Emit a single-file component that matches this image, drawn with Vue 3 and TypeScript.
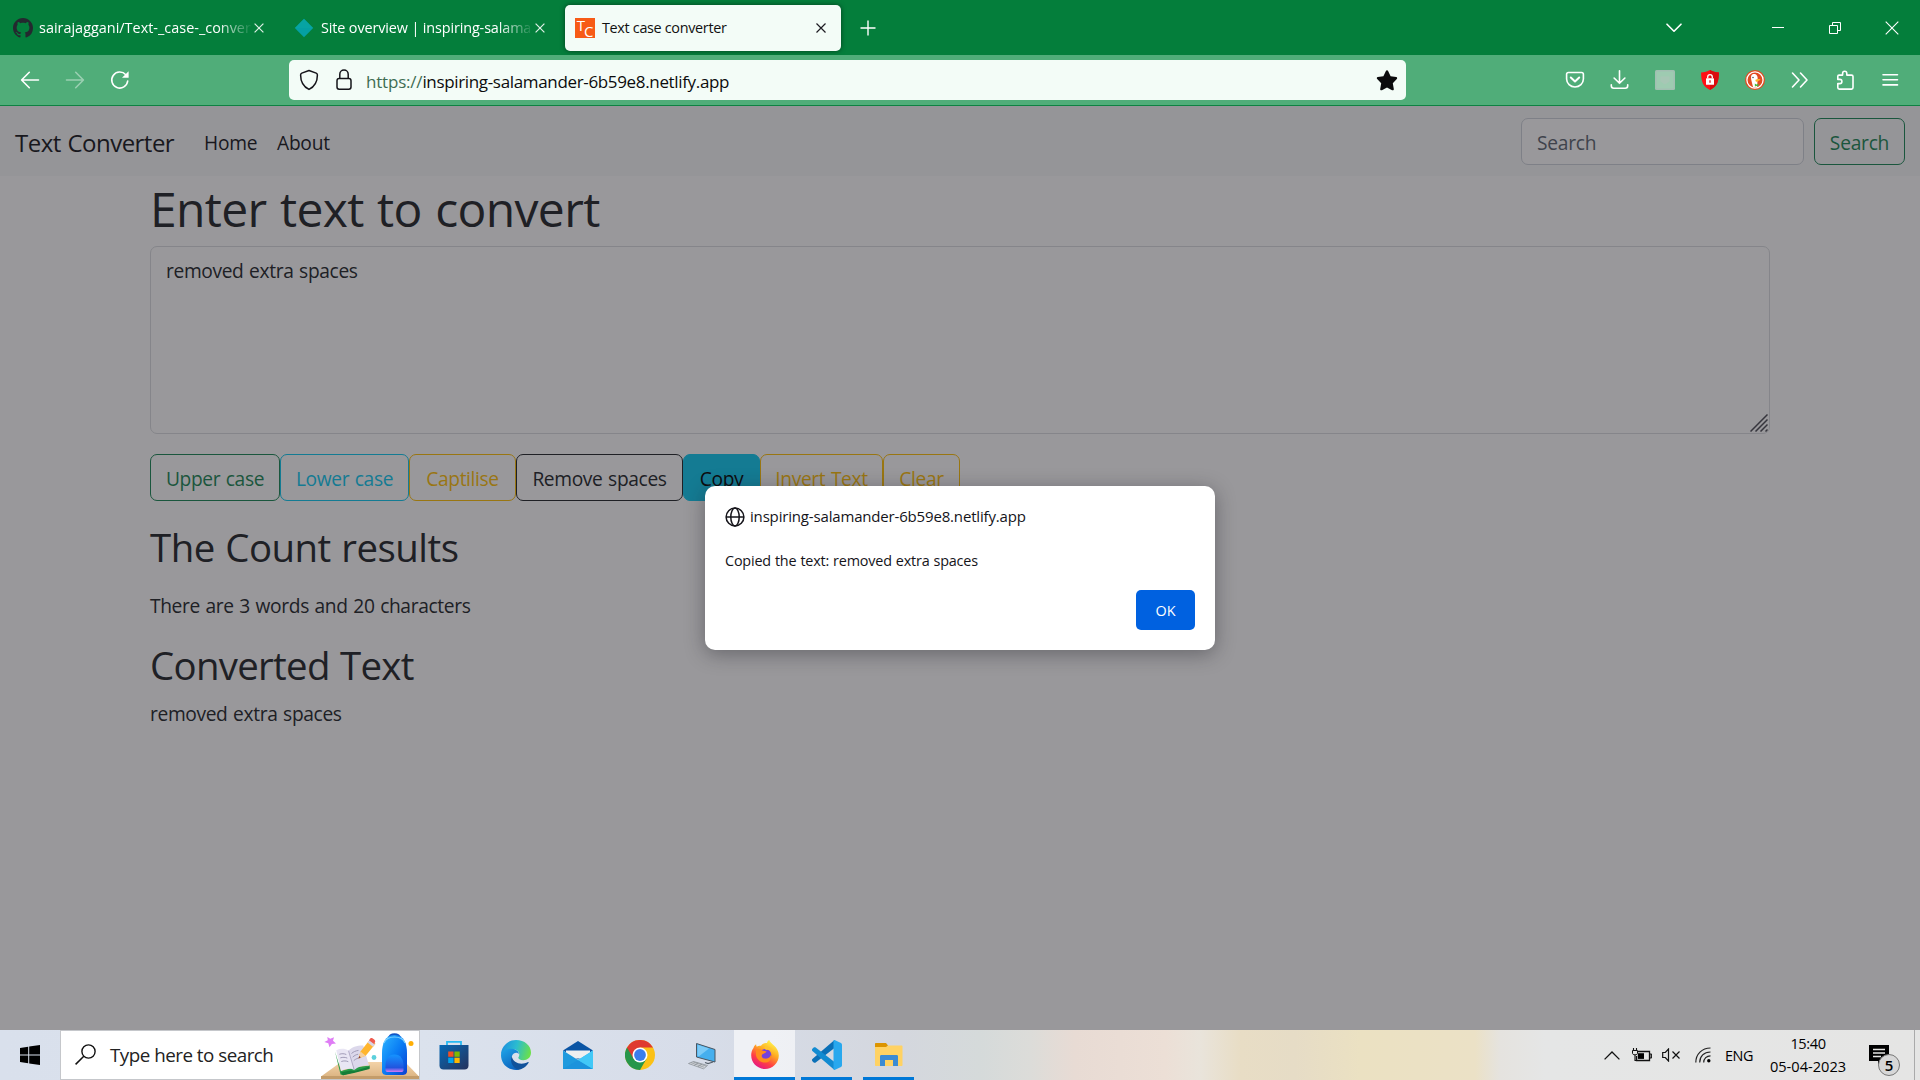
<script setup lang="ts">
interface ActionButton {
  label: string
  tone: string
  width: number
}

const actions: ActionButton[] = [
  { label: 'Upper case', tone: 'success', width: 130 },
  { label: 'Lower case', tone: 'info', width: 129 },
  { label: 'Captilise', tone: 'warning', width: 107 },
  { label: 'Remove spaces', tone: 'dark', width: 167 },
  { label: 'Copy', tone: 'solid', width: 77 },
  { label: 'Invert Text', tone: 'warning', width: 123 },
  { label: 'Clear', tone: 'warning', width: 77 },
]

const text = 'removed extra spaces'
const host = 'inspiring-salamander-6b59e8.netlify.app'
const wordCount = text.split(' ').length
</script>

<template>
  <div class="desktop">
    <header class="tabs">
      <div class="tab first">
        <svg class="fav" width="20" height="20" viewBox="0 0 16 16"><path fill="#24292f" d="M8 0C3.58 0 0 3.58 0 8c0 3.54 2.29 6.53 5.47 7.59.4.07.55-.17.55-.38 0-.19-.01-.82-.01-1.49-2.01.37-2.53-.49-2.69-.94-.09-.23-.48-.94-.82-1.13-.28-.15-.68-.52-.01-.53.63-.01 1.08.58 1.23.82.72 1.21 1.87.87 2.33.66.07-.52.28-.87.51-1.07-1.78-.2-3.64-.89-3.64-3.95 0-.87.31-1.59.82-2.15-.08-.2-.36-1.02.08-2.12 0 0 .67-.21 2.2.82.64-.18 1.32-.27 2-.27s1.36.09 2 .27c1.53-1.04 2.2-.82 2.2-.82.44 1.1.16 1.92.08 2.12.51.56.82 1.27.82 2.15 0 3.07-1.87 3.75-3.65 3.95.29.25.54.73.54 1.48 0 1.07-.01 1.93-.01 2.2 0 .21.15.46.55.38A8.01 8.01 0 0 0 16 8c0-4.42-3.58-8-8-8z"/></svg>
        <span class="tab-title faded repo">sairajaggani/Text-_case-_conver</span>
        <svg class="x" width="10" height="10" viewBox="0 0 10 10"><path d="M.6.6l8.8 8.8M9.4.6L.6 9.4" stroke="#dff0e6" stroke-width="1.2"/></svg>
      </div>
      <div class="tab second">
        <svg class="fav" width="20" height="20" viewBox="0 0 20 20"><path d="M10 .8L19.2 10 10 19.2.8 10z" fill="#05a0a3"/><path d="M10 .8L19.2 10H.8z" fill="#0ba9a5" opacity=".45"/></svg>
        <span class="tab-title faded site">Site overview | inspiring-salama</span>
        <svg class="x" width="10" height="10" viewBox="0 0 10 10"><path d="M.6.6l8.8 8.8M9.4.6L.6 9.4" stroke="#dff0e6" stroke-width="1.2"/></svg>
      </div>
      <div class="tab active">
        <span class="tc"><b>T</b><b>C</b></span>
        <span class="tab-title cur">Text case converter</span>
        <svg class="x" width="10" height="10" viewBox="0 0 10 10"><path d="M.5.5l9 9M9.500.5l-9 9" stroke="#1c1b22" stroke-width="1.2"/></svg>
      </div>
      <svg class="plus" width="16" height="16" viewBox="0 0 16 16"><path d="M8 .5v15M.5 8h15" stroke="#fff" stroke-width="1.4"/></svg>
      <span class="grow"></span>
      <svg class="all" width="16" height="10" viewBox="0 0 16 10"><path d="M1 1.200l7 7 7-7" fill="none" stroke="#fff" stroke-width="1.6" stroke-linecap="round" stroke-linejoin="round"/></svg>
      <div class="win">
        <svg width="14" height="14" viewBox="0 0 14 14"><path d="M1 6.500h12" stroke="#fff"/></svg>
        <svg width="14" height="14" viewBox="0 0 14 14"><path d="M1.500 4.500h8v8h-8zM4.500 4.500v-3h8v8h-3" fill="none" stroke="#fff"/></svg>
        <svg width="14" height="14" viewBox="0 0 14 14"><path d="M.7.700l12.600 12.600M13.300.700L.7 13.300" stroke="#fff" stroke-width="1.100"/></svg>
      </div>
    </header>

    <nav class="toolbar">
      <div class="nav-icons">
        <svg width="20" height="20" viewBox="0 0 20 20"><path d="M18.500 10H2M9.300 2.300L1.600 10l7.700 7.700" class="w"/></svg>
        <svg width="20" height="20" viewBox="0 0 20 20" opacity=".42"><path d="M1.500 10H18M10.700 2.300l7.700 7.700-7.700 7.700" class="w"/></svg>
        <svg width="20" height="20" viewBox="0 0 20 20"><path d="M17.700 11a8 8 0 1 1-1.900-6.200l1.300 1.400" class="w"/><path d="M18.600 1.200v6.600H12z" fill="#fff"/></svg>
      </div>
      <div class="url">
        <svg class="shield" width="20" height="22" viewBox="0 0 20 22"><path d="M10 1.500l7.200 2.600c1 .4 1.200.9 1.200 1.800 0 6.500-2.700 11.600-8.400 14.500C4.300 17.500 1.600 12.400 1.600 5.900c0-.9.200-1.400 1.200-1.800z" class="k"/></svg>
        <svg class="lock" width="16" height="22" viewBox="0 0 16 22"><rect x="1" y="9.500" width="14" height="10.700" rx="2.200" class="k"/><path d="M3.800 9.500V5.300a4.200 4.200 0 0 1 8.400 0v4.200" class="k"/></svg>
        <span class="addr"><i>https://</i>{{ host }}</span>
        <svg class="star" width="22" height="22" viewBox="0 0 22 22"><path d="M11 1.300c.5 0 .9.300 1.100.7l2.500 5.300 5.600.8c1 .2 1.300 1.300.6 2l-4 4.100 1 5.800c.2 1-.8 1.700-1.700 1.200L11 18.500l-5.100 2.700c-.9.500-1.900-.2-1.700-1.200l1-5.800-4-4.100c-.7-.7-.4-1.800.6-2l5.600-.8L9.900 2c.2-.4.600-.7 1.100-.7z" fill="#0b0b0d"/></svg>
      </div>
      <div class="tools">
        <svg width="20" height="20" viewBox="0 0 20 20"><path d="M3.400 2.500h13.200c1 0 1.800.7 1.800 1.700v4.900a8.400 7.900 0 0 1-16.800 0V4.200c0-1 .8-1.700 1.800-1.700z" class="w"/><path d="M5.800 7.500L10 11.400l4.200-3.900" class="w thick"/></svg>
        <svg width="20" height="20" viewBox="0 0 20 20"><path d="M9.500 .8v12.400M4.100 8L9.500 13.300 14.900 8M1.300 14.800v1c0 1.600 1 2.500 2.500 2.500h11.400c1.500 0 2.500-.9 2.500-2.500v-1" class="w"/></svg>
        <svg width="20" height="20" viewBox="0 0 20 20"><rect width="20" height="20" rx="1.500" fill="#a2bfb2"/><rect x="1.500" y="1.500" width="17" height="17" fill="#9ecbb1"/><path d="M5.500 6.500h9v5l-4.500 3-4.500-3z" fill="#a7c7b5"/></svg>
        <svg width="20" height="20" viewBox="0 0 20 20"><path d="M10 0c2.500 1.600 5.500 2.400 8.900 2.500 0 8.500-1.600 14-8.900 17.500C2.700 16.500 1.100 11 1.100 2.500 4.500 2.400 7.500 1.600 10 0z" fill="#ff1014"/><path d="M10 0c2.500 1.600 5.500 2.400 8.900 2.500 0 8.500-1.600 14-8.900 17.500z" fill="#d90c0e"/><rect x="6" y="8.300" width="8" height="6.500" rx=".6" fill="#fff"/><path d="M7.700 8.300V7a2.300 2.300 0 0 1 4.600 0v1.300" fill="none" stroke="#fff" stroke-width="1.300"/><path d="M9.400 10.300h1.200v2.500H9.400z" fill="#d90c0e"/></svg>
        <svg width="20" height="20" viewBox="0 0 20 20"><circle cx="10" cy="10" r="10" fill="#e34a21"/><circle cx="10" cy="10" r="8.100" fill="#e34a21" stroke="#fff" stroke-width="1.300"/><path d="M6.500 5.200c1.200-1.700 4.200-1.500 5.400.3.800 1.200.9 2.800.6 4.200l-.3 7.300c-1.500.6-3 .5-4.200.1-.4-2.500-1.300-5-1.700-7.200-.3-1.700-.5-3.500.2-4.700z" fill="#fff"/><path d="M10.500 9.700c1.500-1 3.500-.9 5-.3-1 1.300-2.500 1.400-3.200 2.300-1.200.3-2.200-.5-1.800-2z" fill="#fcb62b"/><path d="M9.800 13.500l1.700 1 1.900-.7v2.700l-1.800-.5-1.700.6z" fill="#4cb944"/><circle cx="8" cy="7.500" r=".7" fill="#333"/></svg>
        <svg width="20" height="20" viewBox="0 0 20 20"><path d="M2.500 3L9 10l-6.500 7M10.500 3l6.500 7-6.500 7" class="w"/></svg>
        <svg width="20" height="20" viewBox="0 0 20 20"><path d="M2.800 7.500V6.300c0-.7.500-1.200 1.200-1.200h3.600V3.400a2.100 2.100 0 0 1 4.200 0v1.700h4.700c.9 0 1.500.6 1.500 1.500v11c0 .9-.6 1.500-1.500 1.500H4.300c-.9 0-1.500-.6-1.500-1.500v-4h2a2.100 2.100 0 0 0 0-4.200h-2z" class="w"/></svg>
        <svg width="20" height="20" viewBox="0 0 20 20"><path d="M3 4.700h14.500M3 9.700h14.500M3 14.900h14.500" class="w"/></svg>
      </div>
    </nav>

    <main class="page">
      <div class="bsnav">
        <span class="brand">Text Converter</span>
        <span class="link home">Home</span>
        <span class="link">About</span>
        <span class="grow"></span>
        <div class="search-in">Search</div>
        <div class="search-btn">Search</div>
      </div>
      <section class="container">
        <h1>Enter text to convert</h1>
        <div class="area">
          <span>{{ text }}</span>
          <svg class="grip" width="18" height="18" viewBox="0 0 18 18"><path d="M.5 17.500l17-17M5.500 17.500l12-12M10.500 17.500l7-7M15.500 17.500l2-2" stroke="#4c4c55" stroke-width="1.500"/></svg>
        </div>
        <div class="actions">
          <div v-for="a in actions" :key="a.label" class="btn" :class="a.tone" :style="{ width: a.width + 'px' }">{{ a.label }}</div>
        </div>
        <h2 class="count">The Count results</h2>
        <p class="stats">There are {{ wordCount }} words and {{ text.length }} characters</p>
        <h2 class="conv">Converted Text</h2>
        <p class="out">{{ text }}</p>
      </section>
      <div class="backdrop"></div>
      <div class="dialog">
        <div class="who">
          <svg width="20" height="20" viewBox="0 0 20 20"><g fill="none" stroke="#15141a" stroke-width="1.500"><circle cx="10" cy="10" r="8.900"/><ellipse cx="10" cy="10" rx="4.200" ry="8.900"/><path d="M1.100 10h17.800"/></g></svg>
          <span>{{ host }}</span>
        </div>
        <div class="msg">Copied the text: {{ text }}</div>
        <div class="ok">OK</div>
      </div>
    </main>

    <footer class="taskbar">
      <div class="start">
        <svg width="20" height="20" viewBox="0 0 20 20"><path d="M0 2.900l8.200-1.200v7.700H0zM9.200 1.500L20 0v9.400H9.200zM0 10.400h8.200v7.900L0 17.100zM9.200 10.400H20V20L9.200 18.500z"/></svg>
      </div>
      <div class="finder">
        <svg class="mag" width="21" height="21" viewBox="0 0 21 21"><circle cx="13.500" cy="7.500" r="6.600" fill="none" stroke="#111" stroke-width="1.400"/><path d="M8.800 12.200L.6 20.400" stroke="#111" stroke-width="1.500"/></svg>
        <span>Type here to search</span>
        <svg class="art" width="98" height="48" viewBox="0 0 98 48">
          <defs>
            <linearGradient id="desk" x1="0" y1="0" x2="0" y2="1"><stop offset="0" stop-color="#f3d2a8"/><stop offset="1" stop-color="#dcb583"/></linearGradient>
            <linearGradient id="bag" x1="0" y1="0" x2="1" y2="1"><stop offset="0" stop-color="#2db4ff"/><stop offset=".5" stop-color="#0a7df5"/><stop offset="1" stop-color="#0a3fd0"/></linearGradient>
            <linearGradient id="pocket" x1="0" y1="0" x2="0" y2="1"><stop offset="0" stop-color="#1594ff"/><stop offset=".75" stop-color="#2155df"/><stop offset="1" stop-color="#d77bf5"/></linearGradient>
          </defs>
          <path d="M0 45.500L20 31h64l14 14.500z" fill="url(#desk)"/><path d="M0 45h98v3H0z" fill="#c39c6a"/>
          <path d="M6.300 6l3 1.700L13 6.200l-1 3.600 3 2.800-4.100.3-2.400 3.400-1.200-4-4-1.200 3.500-1.900z" fill="#df7df5"/>
          <path d="M14 20.500l5.500 23 2.500.7 10-2.700 16.500-4 .3-3L33 36.500l-13 3.500z" fill="#299b49"/><path d="M19.500 41.500l10-2 4 .5 15-4.500V38L33 42l-11 2.200z" fill="#147d38"/>
          <path d="M15.300 19.200c4.500-2 9-1.700 12.200.5L33.300 39c-3.500-2-8.500-1.500-13.300 1z" fill="#e9e6f4"/><path d="M27.500 19.700c3-3.700 8.500-5.400 14.700-5.300L48 34.500c-5.500-.3-11 .7-14.700 4.500z" fill="#dcd8eb"/>
          <path d="M27.500 19.700L33.300 39" stroke="#aaa4c2" stroke-width=".9"/>
          <path d="M18.300 23.300c2.500-.9 5-.7 7 .2m-6 3.400c2.500-.9 5-.7 7 .2m-6 3.400c2.500-.9 5-.7 7 .2M30.500 22.500c2-1.800 4-2.600 7-3.100m-5.800 6.700c2-1.800 3.300-2.400 5.500-2.900m-4.400 6.400c2-1.800 4-2.600 7-3.100" stroke="#9893b0" stroke-width=".9" fill="none"/>
          <path d="M37.500 27.500l2-7 9.500-12 5.500 4.300-9.800 12z" fill="#ffb52e"/><path d="M37.500 27.500l2-7 5.200 4.300z" fill="#f5cfa0"/><path d="M37.500 27.500l.7-2.500 1.600 1.300z" fill="#733"/><path d="M46.500 11.500l2-2.600 5.500 4.300-2 2.600z" fill="#d9d4e3"/><path d="M48 9.200l1.500-1.900c1.200-1.400 5.700 1.900 4.600 3.700l-1 1.900z" fill="#f05a4e"/>
          <circle cx="53" cy="26.500" r="2.400" fill="#5cd0dc"/><circle cx="90" cy="12.500" r="2.500" fill="#ffaf05"/>
          <path d="M68 8c0-6 11-6 11 0" fill="none" stroke="#1254c4" stroke-width="2.600"/><path d="M61 22c0-9 3-18 12.500-18S86 13 86 22v18c0 3-2 4-5 4H66c-3 0-5-1-5-4z" fill="url(#bag)"/><path d="M63 12c3-8 18-8 21 0" fill="none" stroke="#77cfff" stroke-width="1.200"/><path d="M64.500 35c0-7 3-11.500 9-11.500s9 4.500 9 11.500v4c0 1.500-1 2-2.500 2H67c-1.500 0-2.500-.5-2.500-2z" fill="url(#pocket)"/>
        </svg>
      </div>
      <div class="app"><svg width="30" height="30" viewBox="0 0 30 30"><defs><linearGradient id="store" x1="0" y1="0" x2="1" y2="1"><stop stop-color="#0669b5"/><stop offset="1" stop-color="#26325c"/></linearGradient></defs><path d="M8 6V1.800h14V6" fill="none" stroke="#27b9f2" stroke-width="1.800"/><path d="M.5 5h29v20.500c0 2.500-1.500 4-4 4h-21c-2.500 0-4-1.500-4-4z" fill="url(#store)"/><path d="M9.200 11.500h5.300v5.300H9.200z" fill="#f25022"/><path d="M15.400 11.500h5.300v5.300h-5.300z" fill="#7fba00"/><path d="M9.200 17.700h5.300V23H9.200z" fill="#00a4ef"/><path d="M15.400 17.700h5.300V23h-5.300z" fill="#ffb900"/></svg></div>
      <div class="app"><svg width="30" height="30" viewBox="0 0 30 30"><defs><linearGradient id="e1" x1="0" y1=".3" x2="1" y2=".5"><stop stop-color="#1c8fe0"/><stop offset=".5" stop-color="#2bbcd0"/><stop offset="1" stop-color="#6be04a"/></linearGradient><linearGradient id="e2" x1="0" y1="0" x2=".6" y2="1"><stop stop-color="#1fa5e8"/><stop offset="1" stop-color="#0c62bd"/></linearGradient></defs><path d="M0 14.500C.3 6.500 7 0 15 0c8.500 0 15 5.500 15 12.500 0 5-3.700 7.700-7.700 7.700-3.500 0-5-1.400-5-2.400 0-.8 1-1.300 1-3.400 0-3-3-5.400-7-5.400C6 9 2 11 0 14.500z" fill="url(#e1)"/><path d="M0 15C.3 10.800 5.500 8.200 11 8.800c4 .4 7 2.600 7 5.500-1-2-5.500-2.300-7 1.700-1.600 5 2.500 11.500 9.500 11.700C18.500 29.300 17 30 15 30 6.500 30 0 23.500 0 15z" fill="url(#e2)"/><path d="M10.800 16.200C8.700 21 11 27.500 17.500 29.800c4-.6 8-3.300 10.200-7.300.2-.5-.3-.8-.7-.5-6.500 3.500-15 1.300-16.200-5.800z" fill="#11529b"/></svg></div>
      <div class="app"><svg width="30" height="30" viewBox="0 0 30 30"><path d="M0 10.500L15 1l15 9.500-15 9z" fill="#0b55a4"/><path d="M3 10.500h24v8H3z" fill="#f0f0f0"/><path d="M0 10.500l15 9.500v9H0z" fill="#1f9ade"/><path d="M30 10.500L15 20 4 29h26z" fill="#35bbf1"/><path d="M0 29l15-9 15 9z" fill="#1b93dc"/><path d="M30 10.500V29L15 20z" fill="#41c8f7"/></svg></div>
      <div class="app"><svg width="30" height="30" viewBox="0 0 30 30"><circle cx="15" cy="15" r="15" fill="#fbc116"/><path d="M15 15L2 7.500A15 15 0 0 0 15 30l6.500-11.200z" fill="#27964a"/><path d="M2 7.500A15 15 0 0 1 28 7.500H15L8.500 18.700z" fill="#df3a2f"/><circle cx="15" cy="15" r="7.500" fill="#fff"/><circle cx="15" cy="15" r="5.900" fill="#3b7ded"/></svg></div>
      <div class="app"><svg width="30" height="30" viewBox="0 0 30 30"><path d="M9.500 3.500l18.500 6v12.500L9.500 17z" fill="#45afee" stroke="#4a5560" stroke-width="1"/><path d="M10.500 4.700L22 8.500 12 16.300l-1.500-.4z" fill="#7bcaf7"/><path d="M26 22l-5 1.500-3-1" fill="none" stroke="#58626c" stroke-width="1.200"/><path d="M1.500 23.500l5-2 14 4-4 3.300z" fill="#d9dce1" stroke="#8a9097" stroke-width=".8"/><path d="M4 22.700l13 4.500M6 21.900l13 4.200M7 25.500l4-2.500M11 26.700l4-2.500" stroke="#8a9097" stroke-width=".7"/></svg></div>
      <div class="app firefox"><svg width="30" height="30" viewBox="0 0 30 30"><defs><linearGradient id="ff" x1=".8" y1=".1" x2=".3" y2="1"><stop stop-color="#fff04a"/><stop offset=".35" stop-color="#ffab21"/><stop offset=".7" stop-color="#ff3f45"/><stop offset="1" stop-color="#e31587"/></linearGradient></defs><path d="M3.500 8c.5-1.700 1.400-3 2.600-3.700 0 1 .2 1.800.7 2.500C8.200 5.700 10 5.500 11 5.700 12.500 3.500 15 3 17 3c.3-1.500 1-2.500 2.300-3C20 4 28.700 6 28.800 15.500 28.800 23 22.500 29 15 29S1.200 23 1.200 15.300C1.200 12.500 2 10 3.500 8z" fill="url(#ff)"/><circle cx="15.300" cy="15" r="6" fill="#7540dc"/><path d="M6 10c2-1.500 4.200-1 6 .2 1.300.8 3.500.6 4.500 1.300-.5 1.700-2.700 1.700-4 2.800-1.800 1.700-.2 3.900 2 4.300 3.500.7 6-1.500 6.500-4 .7 5-2 8-6 8-5 0-8-3.500-9-7z" fill="#ff8b1e"/><path d="M15 6.200c3.800-.3 7.500 2.300 8 6.300-2-2.800-4.500-3-7-2.500-1.200-1-1.800-2.500-1-3.800z" fill="#ffc42e"/></svg></div>
      <div class="app open"><svg width="30" height="30" viewBox="0 0 30 30"><path d="M22.500 0v8L3.700 22.500c-.6.500-1.500.4-2-.1L.4 21.200c-.6-.6-.6-1.600 0-2.200z" fill="#0b70b7"/><path d="M22.500 30v-8L3.700 7.500c-.6-.5-1.500-.4-2 .1L.4 8.800c-.6.600-.6 1.600 0 2.200z" fill="#128bd1"/><path d="M22.500 0l6.500 3c.6.300 1 .9 1 1.500v21c0 .6-.4 1.200-1 1.500l-6.500 3c-.7 0-1-.6-1-1.200V1.200c0-.6.300-1.200 1-1.200z" fill="#28a8ee"/></svg></div>
      <div class="app open files"><svg width="30" height="30" viewBox="0 0 30 30"><path d="M1 4c0-.6.400-1 1-1h10l2 2.500L12 8H1z" fill="#dc9400"/><path d="M1 7h11l2-1.500h13.500c.7 0 1 .4 1 1V25c0 .600-.4 1-1 1H2c-.6 0-1-.4-1-1z" fill="#ffd263"/><path d="M6 26V16.500c0-1 .5-1.500 1.500-1.500h15c1 0 1.500.5 1.500 1.500V26h-5v-6h-8v6z" fill="#3b8bd4"/></svg></div>
      <span class="grow"></span>
      <div class="tray">
        <svg class="t1" width="16" height="9" viewBox="0 0 16 9"><path d="M.6 8.400L8 1l7.400 7.400" fill="none" stroke="#111" stroke-width="1.300"/></svg>
        <svg class="t2" width="20" height="14" viewBox="0 0 20 14"><path d="M6 3.500h11.500v9H4.500V8" fill="none" stroke="#111" stroke-width="1.300"/><path d="M5.800 5.200H12v5.700H5.800z"/><path d="M18 6h1.600v4H18zM.5 2.500h5v2.700c0 1-.8 1.600-2.500 1.600S.5 6.200.5 5.200z" fill="#e5e5e4" stroke="#111"/><path d="M1.500 2.500V0M4.500 2.500V0M3 7v5.500h2" stroke="#111" stroke-width="1.100" fill="none"/></svg>
        <svg class="t3" width="19" height="14" viewBox="0 0 19 14"><path d="M.7 4.500h2.600L6.500 1v12L3.300 9.500H.7z" fill="none" stroke="#111" stroke-width="1.200"/><path d="M10.500 3.500l7 7m0-7l-7 7" stroke="#111" stroke-width="1.200"/></svg>
        <svg class="t4" width="16" height="16" viewBox="0 0 16 16"><g fill="none" stroke="#222" stroke-width="1.200"><path d="M.8 15.500C.8 7 7 1 15.500 1M4.700 15.500C4.700 9 9 5 15.500 5M8.700 15.500c0-4 3-6.700 6.800-6.700" /></g><circle cx="13.800" cy="13.800" r="1.700"/></svg>
        <span class="lang">ENG</span>
        <div class="clock"><span class="time">15:40</span><span class="date">05-04-2023</span></div>
        <div class="notes">
          <svg width="20" height="20" viewBox="0 0 20 20"><path d="M0 0h20v16h-8l-3 3.500V16H0z"/><path d="M4 4.500h12M4 8h12M4 11.500h8" stroke="#e5e5e4" stroke-width="1.300"/></svg>
          <span class="badge">5</span>
        </div>
      </div>
      <div class="peek"></div>
    </footer>
  </div>
</template>

<style>
html, body { margin: 0; overflow: hidden; }
</style>

<style scoped>
* { box-sizing: border-box; }
.desktop { width: 1920px; height: 1080px; display: flex; flex-direction: column; overflow: hidden; font-family: "Open Sans", "Noto Sans", sans-serif; white-space: nowrap; color: #000; }
svg { display: block; flex: none; }
.grow { flex: 1; }
.w { fill: none; stroke: #fff; stroke-width: 1.6; stroke-linecap: round; stroke-linejoin: round; }
.thick { stroke-width: 2; }
.k { fill: none; stroke: #15141a; stroke-width: 1.5; stroke-linejoin: round; }

.tabs { height: 55px; flex: none; background: #047e3b; display: flex; align-items: center; }
.tab { display: flex; align-items: center; height: 46px; color: #fff; }
.tab-title { font-size: 14.4px; letter-spacing: -0.32px; line-height: 24px; flex: none; }
.first { width: 281px; padding-left: 13px; }
.second { width: 284px; padding-left: 13px; }
.first .tab-title { margin-left: 6px; width: 212px; letter-spacing: 0.02px; }
.second .tab-title { margin-left: 7px; width: 211px; letter-spacing: -0.12px; }
.faded { mask-image: linear-gradient(90deg, #000 84%, transparent 101%); }
.tab .x { margin-left: 3px; }
.active { width: 276px; background: #f3fcf7; border-radius: 5px; color: #111; padding-left: 10px; box-shadow: 0 0 5px rgba(0, 0, 0, .5); }
.active .tab-title { margin-left: 7px; width: 214px; }
.active .x { margin-left: 0; }
.tc { width: 20px; height: 20px; background: #f75b16; color: #fff; display: flex; justify-content: center; font: 500 15px/15px "Open Sans", sans-serif; }
.tc b { font-weight: 500; }
.tc b + b { padding-top: 6px; margin-left: -1px; }
.plus { margin-left: 19px; }
.all { margin-right: 89px; }
.win { display: flex; gap: 43px; margin-right: 21px; }

.toolbar { height: 51px; flex: none; background: #50ad79; border-bottom: 1px solid #0e8243; display: flex; align-items: center; }
.nav-icons { display: flex; gap: 25px; padding-left: 20px; width: 289px; }
.url { width: 1117px; height: 40px; background: #f3fcf7; border-radius: 5px; display: flex; align-items: center; padding-left: 10px; padding-right: 8px; }
.lock { margin-left: 17px; }
.addr { margin-left: 14px; font-size: 17px; letter-spacing: -0.34px; padding-top: 3px; flex: 1; color: #0c0c0d; }
.addr i { font-style: normal; color: #3f6d53; letter-spacing: -0.2px; }
.tools { display: flex; gap: 25px; margin-left: 159px; }

.page { position: relative; height: 924px; flex: none; background: #fff; color: #212529; overflow: hidden; }
.bsnav { height: 70px; background: #f8f9fa; display: flex; align-items: center; padding: 0 15px; font-size: 19.2px; letter-spacing: -0.25px; }
.brand { font-size: 24px; letter-spacing: -0.52px; word-spacing: 1px; width: 189px; color: #15161a; padding-top: 2px; }
.link { color: #15161a; padding-top: 2px; }
.home { width: 73px; }
.search-in { width: 283px; height: 47px; border: 1px solid #ced4da; border-radius: 7px; background: #fff; padding: 1px 15px 0; line-height: 45px; color: #5c6570; margin-right: 10px; }
.search-btn { width: 91px; height: 47px; border: 1px solid #198754; border-radius: 7px; line-height: 46px; padding-top: 1px; color: #198754; text-align: center; }
.container { width: 1620px; margin: 0 auto; font-size: 19.2px; letter-spacing: -0.36px; word-spacing: 1px; }
h1, h2, p { margin: 0; font-weight: 400; }
h1 { font-size: 48px; line-height: 60px; padding-top: 3px; height: 70px; letter-spacing: -0.65px; word-spacing: 1.6px; }
.area { position: relative; height: 188px; border: 1px solid #dadde0; border-radius: 7px; padding: 9px 15px; line-height: 30px; }
.grip { position: absolute; right: 1px; bottom: 1px; }
.actions { display: flex; margin-top: 20px; }
.btn { height: 47px; border: 1px solid; border-radius: 7px; line-height: 48px; text-align: center; flex: none; }
.success { color: #198754; }
.info { color: #0dcaf0; }
.warning { color: #ffc107; }
.dark { color: #212529; }
.solid { background: #0dcaf0; border-color: #0dcaf0; color: #000; }
h2 { font-size: 38.4px; line-height: 48px; letter-spacing: -0.5px; word-spacing: 1px; }
.count { margin-top: 22px; }
.stats { line-height: 30px; margin-top: 20px; }
.conv { margin-top: 20px; letter-spacing: -0.7px; }
.out { line-height: 30px; margin-top: 10px; }
.backdrop { position: absolute; inset: 0; background: rgba(28, 27, 34, .45); }
.dialog { position: absolute; left: 705px; top: 380px; width: 510px; height: 164px; background: #fff; border-radius: 10px; box-shadow: 0 4px 20px rgba(28, 27, 34, .4); padding: 20px; color: #15141a; display: flex; flex-direction: column; }
.who { display: flex; align-items: center; height: 22px; font-size: 15px; font-weight: 500; letter-spacing: -0.17px; gap: 5px; }
.who span { margin-top: -2px; }
.msg { font-size: 14.4px; letter-spacing: -0.18px; word-spacing: .4px; line-height: 24px; margin-top: 21px; }
.ok { align-self: flex-end; margin-top: 17px; width: 59px; height: 40px; border-radius: 5px; background: #0061e0; color: #fff; font-size: 14.4px; font-weight: 500; text-align: center; line-height: 41px; flex: none; }

.taskbar { height: 50px; flex: none; display: flex; background: linear-gradient(90deg, #d9e0ec 0, #dbe2ed 420px, #d7dde9 700px, #d4d7de 900px, #d5dada 980px, #dcdcd9 1030px, #e8dbd4 1075px, #ecdfd6 1165px, #e9e4db 1200px, #e8ddc5 1240px, #e6dcc6 1295px, #ebe1c2 1360px, #ebe1c6 1475px, #e5e3df 1500px, #e5e6e6 1545px, #e5e5e4 1920px); }
.start { width: 60px; display: flex; align-items: center; padding-left: 20px; }
.finder { width: 360px; height: 50px; border: 1px solid #c5c7cb; background: #fff; display: flex; align-items: center; padding-left: 14px; font-size: 18.8px; letter-spacing: -0.5px; color: #222; }
.finder .mag { margin-top: -2px; }
.finder span { margin-left: 14px; width: 212px; }
.app { width: 61px; margin-right: 1px; height: 50px; display: flex; align-items: center; justify-content: center; border-bottom: 3px solid transparent; padding-top: 3px; }
.finder + .app { margin-left: 3px; }
.firefox { background: rgba(255, 255, 255, .6); border-bottom-color: #0078d7; margin-left: 1px; }
.open { width: 51px; margin: 0 5px 0 5px; border-bottom-color: #0078d7; }
.files { margin-left: 6px; }
.tray { display: flex; align-items: center; width: 310px; }
.t2 { margin-left: 12px; }
.t3 { margin-left: 10px; }
.t4 { margin-left: 14px; }
.lang { font-size: 14.4px; letter-spacing: -0.4px; margin-left: 14px; width: 44px; padding-top: 1px; }
.clock { width: 78px; display: flex; flex-direction: column; align-items: center; font-size: 14.6px; line-height: 23px; }
.time { letter-spacing: -0.4px; }
.date { letter-spacing: 0; }
.notes { position: relative; margin-left: 22px; }
.badge { position: absolute; left: 9px; top: 9px; width: 22px; height: 22px; border: 1px solid #777; border-radius: 50%; background: #d7d7d7; font-size: 15px; font-weight: 600; line-height: 20px; text-align: center; }
.peek { width: 6px; border-left: 1px solid #aaa; }
</style>
